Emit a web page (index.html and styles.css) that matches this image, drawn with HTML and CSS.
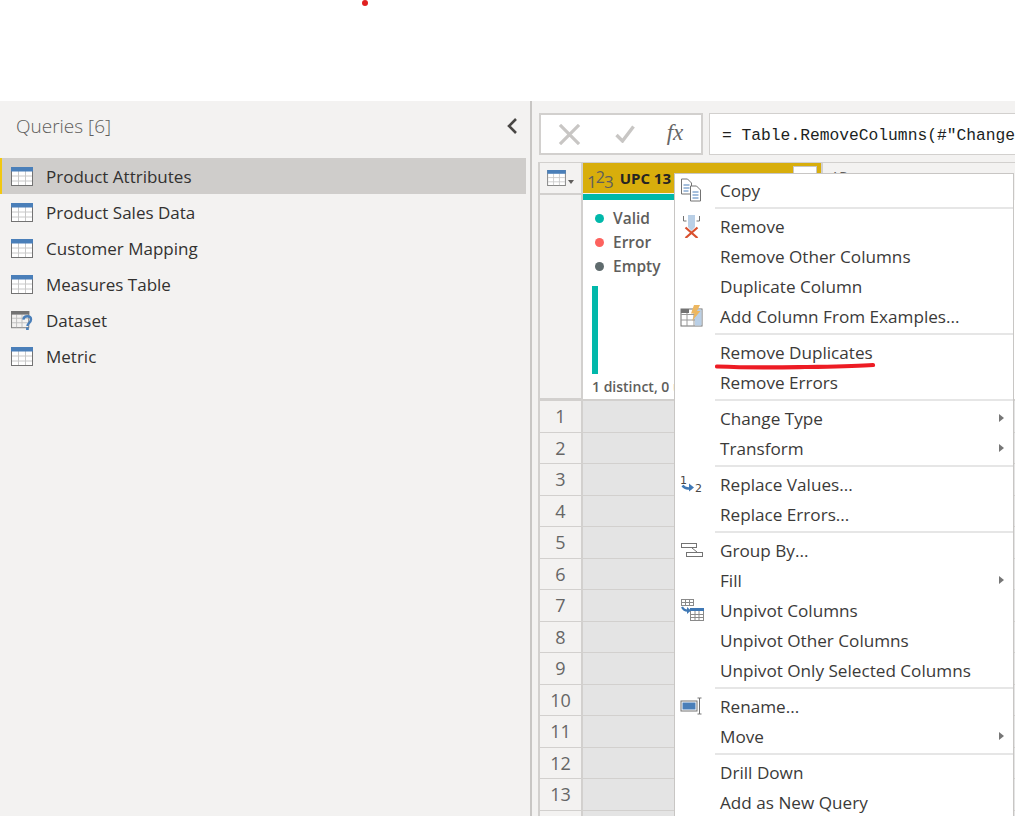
FILE: index.html
```html
<!DOCTYPE html>
<html lang="en">
<head>
  <meta charset="UTF-8"/>
  <meta name="viewport" content="width=device-width, initial-scale=1"/>
  <title>Power Query Editor</title>
  <link rel="stylesheet" href="styles.css">
</head>
<body>

  <!-- shared icons -->
  <svg class="defs" width="0" height="0" aria-hidden="true">
    <symbol id="table" viewBox="0 0 22 19">
      <rect x="0.5" y="0.5" width="21" height="18" fill="#fff" stroke="#737373"/>
      <path d="M1 9h20M1 14h20M7.5 4v14M14.5 4v14" stroke="#c8c8c8" fill="none"/>
      <rect x="0" y="0" width="22" height="4.5" fill="#4a7fb9"/>
    </symbol>
  </svg>

  <div class="top-band"></div>

  <div class="workspace">
    <aside class="queries">
      <div class="queries-head">
        <h2>Queries [6]</h2>
        <svg class="collapse" width="14" height="18" viewBox="0 0 14 18"><path d="M11 2 4 9l7 7" fill="none" stroke="#484644" stroke-width="2.6"/></svg>
      </div>
      <ul class="query-list">
        <li class="query selected"><svg class="query-icon"><use href="#table"/></svg>Product Attributes</li>
        <li class="query"><svg class="query-icon"><use href="#table"/></svg>Product Sales Data</li>
        <li class="query"><svg class="query-icon"><use href="#table"/></svg>Customer Mapping</li>
        <li class="query"><svg class="query-icon"><use href="#table"/></svg>Measures Table</li>
        <li class="query">
          <svg class="query-icon" viewBox="0 0 24 21">
            <rect x="0.5" y="0.5" width="19" height="18" fill="#f3f2f1" stroke="#737373"/>
            <path d="M1 8h18M1 13h18M6 4v14M12 4v14" stroke="#bdbdbd" fill="none"/>
            <rect x="0" y="0" width="20" height="4" fill="#737373"/>
            <path d="M13.5 9.5c.5-5 8.500-5 8.500 0 0 3.500-4 3.500-4 7" fill="none" stroke="#4a7fb9" stroke-width="2.600"/>
            <rect x="16.500" y="18" width="3" height="3" fill="#4a7fb9"/>
          </svg>
          Dataset
        </li>
        <li class="query"><svg class="query-icon"><use href="#table"/></svg>Metric</li>
      </ul>
    </aside>

    <main class="editor">
      <div class="formula-row">
        <div class="formula-tools">
          <span class="tool">
            <svg width="23" height="21" viewBox="0 0 24 22"><path d="M2 1l20 20M22 1 2 21" stroke="#c8c6c4" stroke-width="3.400" fill="none"/></svg>
          </span>
          <span class="tool">
            <svg width="20" height="18" viewBox="0 0 20 18"><path d="M1.500 10l6 6L18.500 1.500" stroke="#c8c6c4" stroke-width="3.400" fill="none"/></svg>
          </span>
          <span class="tool tool-fx">fx</span>
        </div>
        <div class="formula-input">= Table.RemoveColumns(#"Changed Type",{"Column1"})</div>
      </div>

      <div class="grid">
        <div class="corner">
          <svg class="corner-icon"><use href="#table"/></svg>
          <span class="caret"></span>
        </div>
        <div class="col-head active">
          <span class="type-icon">1<span class="type-raised">2</span>3</span>
          <span class="col-name">UPC 13 digit</span>
          <span class="filter-btn"></span>
        </div>
        <div class="col-head other">
          <span class="type-abc">AB</span>
          <span class="col-name">Product</span>
        </div>

        <div class="row-num profile-gutter"></div>
        <div class="profile">
          <ul class="quality">
            <li><i class="dot dot-valid"></i>Valid</li>
            <li><i class="dot dot-error"></i>Error</li>
            <li><i class="dot dot-empty"></i>Empty</li>
          </ul>
          <div class="dist-bar"></div>
          <div class="distinct">1 distinct, 0 unique</div>
        </div>
        <div class="profile profile-other"></div>

        <div class="row-num">1</div><div class="cell"></div><div class="cell"></div>
        <div class="row-num">2</div><div class="cell"></div><div class="cell"></div>
        <div class="row-num">3</div><div class="cell"></div><div class="cell"></div>
        <div class="row-num">4</div><div class="cell"></div><div class="cell"></div>
        <div class="row-num">5</div><div class="cell"></div><div class="cell"></div>
        <div class="row-num">6</div><div class="cell"></div><div class="cell"></div>
        <div class="row-num">7</div><div class="cell"></div><div class="cell"></div>
        <div class="row-num">8</div><div class="cell"></div><div class="cell"></div>
        <div class="row-num">9</div><div class="cell"></div><div class="cell"></div>
        <div class="row-num">10</div><div class="cell"></div><div class="cell"></div>
        <div class="row-num">11</div><div class="cell"></div><div class="cell"></div>
        <div class="row-num">12</div><div class="cell"></div><div class="cell"></div>
        <div class="row-num">13</div><div class="cell"></div><div class="cell"></div>
        <div class="row-num"></div><div class="cell"></div><div class="cell"></div>
      </div>
    </main>
  </div>

  <!-- context menu -->
  <div class="menu">
    <div class="item">
      <span class="item-icon">
        <svg width="24" height="24" viewBox="0 0 24 24">
          <path d="M1.500 1h6l4 4v11h-10z" fill="#fff" stroke="#737373"/>
          <path d="M3.500 7h6M3.500 10h6M3.500 13h5" stroke="#4a7fb9"/>
          <path d="M10.500 8h6l4 4v11h-10z" fill="#fff" stroke="#737373"/>
          <path d="M12.500 14h6M12.500 17h6M12.500 20h6" stroke="#4a7fb9"/>
        </svg>
      </span>
      Copy
    </div>
    <div class="sep"></div>

    <div class="item">
      <span class="item-icon">
        <svg width="24" height="24" viewBox="0 0 24 24">
          <path d="M3.500 2v5h3M19.500 2v5h-3" fill="none" stroke="#737373"/>
          <rect x="8" y="1" width="7" height="12" fill="#b9cfe6"/>
          <path d="M11.500 17 8 13h7z" fill="#b9cfe6"/>
          <path d="M5.500 13.500 17.500 24M17.500 13.500 5.500 24" stroke="#d9502e" stroke-width="2.200" fill="none"/>
        </svg>
      </span>
      Remove
    </div>
    <div class="item"><span class="item-icon"></span>Remove Other Columns</div>
    <div class="item"><span class="item-icon"></span>Duplicate Column</div>
    <div class="item">
      <span class="item-icon">
        <svg width="24" height="22" viewBox="0 0 24 22">
          <rect x="1" y="4" width="21" height="17" fill="#fff" stroke="#737373"/>
          <rect x="15" y="4.500" width="6.500" height="16" fill="#b9cfe6"/>
          <path d="M1 9.500h14M1 15h14M7 8v13M14 4v17" stroke="#9a9a9a" fill="none"/>
          <rect x="1" y="4" width="8" height="4" fill="#737373"/>
          <path d="M14 0h6l-3 6h3.500L12 16l2.500-7.500H11z" fill="#edb760"/>
        </svg>
      </span>
      Add Column From Examples...
    </div>
    <div class="sep"></div>

    <div class="item"><span class="item-icon"></span>Remove Duplicates</div>
    <div class="item"><span class="item-icon"></span>Remove Errors</div>
    <div class="sep"></div>

    <div class="item"><span class="item-icon"></span>Change Type<i class="arrow"></i></div>
    <div class="item"><span class="item-icon"></span>Transform<i class="arrow"></i></div>
    <div class="sep"></div>

    <div class="item">
      <span class="item-icon">
        <svg width="24" height="22" viewBox="0 0 24 22">
          <text class="icon-num" x="0" y="11">1</text>
          <text class="icon-num" x="15" y="19">2</text>
          <path d="M2.500 12.500c2 3 5 3.500 9 2.500" fill="none" stroke="#3f78b5" stroke-width="2.400"/>
          <path d="M9 10.500l5 4-5 4z" fill="#3f78b5"/>
        </svg>
      </span>
      Replace Values...
    </div>
    <div class="item"><span class="item-icon"></span>Replace Errors...</div>
    <div class="sep"></div>

    <div class="item">
      <span class="item-icon">
        <svg width="24" height="16" viewBox="0 0 24 16">
          <rect x="1.500" y="1.500" width="15" height="4" fill="#fff" stroke="#737373"/>
          <rect x="6.500" y="10.500" width="16" height="4" fill="#fff" stroke="#737373"/>
          <path d="M12 6l5 4" stroke="#737373" fill="none"/>
        </svg>
      </span>
      Group By...
    </div>
    <div class="item"><span class="item-icon"></span>Fill<i class="arrow"></i></div>
    <div class="item">
      <span class="item-icon">
        <svg width="24" height="22" viewBox="0 0 24 22">
          <rect x="1.500" y="0.500" width="12" height="6" fill="#fff" stroke="#8a8a8a"/>
          <path d="M1 3.500h12M5.500 1v6M9.500 1v6" stroke="#8a8a8a" fill="none"/>
          <rect x="10.500" y="10.500" width="13" height="11" fill="#fff" stroke="#8a8a8a"/>
          <path d="M11 15.500h12M11 18.500h12M15 11v10M19 11v10" stroke="#8a8a8a" fill="none"/>
          <rect x="10" y="9" width="14" height="3" fill="#3f78b5"/>
          <path d="M2 8c1.500 3 4 4 7 3.500" fill="none" stroke="#3f78b5" stroke-width="2.200"/>
          <path d="M7 8l4 3.500-4 3.500z" fill="#3f78b5"/>
        </svg>
      </span>
      Unpivot Columns
    </div>
    <div class="item"><span class="item-icon"></span>Unpivot Other Columns</div>
    <div class="item"><span class="item-icon"></span>Unpivot Only Selected Columns</div>
    <div class="sep"></div>

    <div class="item">
      <span class="item-icon">
        <svg width="24" height="18" viewBox="0 0 24 18">
          <rect x="1" y="4" width="16" height="10" fill="#fff" stroke="#737373"/>
          <rect x="2.500" y="5.500" width="13" height="7" fill="#4a7fb9"/>
          <path d="M17.500 1h2v16h-2M21.500 1h-2M21.500 17h-2" stroke="#737373" fill="none"/>
        </svg>
      </span>
      Rename...
    </div>
    <div class="item"><span class="item-icon"></span>Move<i class="arrow"></i></div>
    <div class="sep"></div>

    <div class="item"><span class="item-icon"></span>Drill Down</div>
    <div class="item"><span class="item-icon"></span>Add as New Query</div>
  </div>

  <!-- hand drawn marks on top of the screenshot -->
  <i class="red-dot"></i>
  <svg class="red-line" width="162" height="8" viewBox="0 0 162 8">
    <path d="M2 4.500C40 6 60 5.500 90 5c25-.4 50-.5 68-2" fill="none" stroke="#ed1c24" stroke-width="4.200" stroke-linecap="round"/>
  </svg>

</body>
</html>
```

FILE: styles.css
```css
html, body {
  margin: 0;
  height: 816px;
  overflow: hidden;
}

body {
  font-family: "Open Sans", "Noto Sans", Arial, sans-serif;
  font-size: 17px;
  color: #3b3a39;
  background-color: #fff;
}

ul {
  list-style: none;
  margin: 0;
  padding: 0;
}

.defs {
  display: block;
  height: 0;
}

.top-band {
  height: 101px;
}

.workspace {
  display: flex;
  height: 715px;
  background-color: #f3f2f1;
}

/* === QUERIES PANE === */
.queries {
  width: 530px;
  flex: none;
  border-right: 2px solid #c8c6c4;
}

.queries-head {
  display: flex;
  align-items: center;
  justify-content: space-between;
  height: 49px;
  padding: 0 11px 0 16px;
  margin-bottom: 8px;
}

.queries-head h2 {
  margin: 0;
  font-size: 19px;
  font-weight: 300;
  color: #605e5c;
}

.collapse {
  margin-top: 1px;
}

.query-list {
  width: 526px;
}

.query {
  display: flex;
  align-items: center;
  height: 36px;
  padding-left: 11px;
  color: #323130;
}

.query.selected {
  background-color: #cfcdcb;
  box-shadow: inset 2px 0 0 #f2c811;
}

.query-icon {
  width: 22px;
  height: 19px;
  margin-right: 13px;
  flex: none;
}

/* === FORMULA BAR === */
.editor {
  flex: 1;
  min-width: 0;
  padding: 12px 0 0 7px;
}

.formula-row {
  display: flex;
  gap: 6px;
  height: 42px;
  margin-bottom: 7px;
}

.formula-tools {
  display: flex;
  width: 164px;
  flex: none;
  box-sizing: border-box;
  background-color: #fff;
  border: 2px solid #d2d0ce;
}

.tool {
  display: flex;
  align-items: center;
  justify-content: center;
  width: 56px;
}

.tool-fx {
  width: 44px;
  padding-bottom: 2px;
  font-family: "Liberation Serif", serif;
  font-style: italic;
  font-size: 23px;
  color: #666;
}

.formula-input {
  flex: 1;
  min-width: 0;
  overflow: hidden;
  white-space: pre;
  padding-left: 12px;
  line-height: 43px;
  font-family: "Liberation Mono", monospace;
  font-size: 16.3px;
  color: #201f1e;
  background-color: #fff;
  border: 1px solid #d2d0ce;
  border-right: none;
}

/* === DATA GRID === */
.grid {
  display: grid;
  grid-template-columns: 41px 238px 1fr;
  grid-template-rows: 31px 207px;
  grid-auto-rows: 31.5px;
  column-gap: 2px;
  height: 654px;
  margin-left: -1px;
  overflow: hidden;
  background-color: #d2d0ce;
  border-top: 1px solid #d2d0ce;
  border-left: 2px solid #d2d0ce;
}

.corner {
  display: flex;
  align-items: center;
  padding-left: 7px;
  background-color: #f3f2f1;
  border-bottom: 1px solid #d2d0ce;
}

.corner-icon {
  width: 19px;
  height: 16px;
}

.caret {
  width: 0;
  height: 0;
  margin: 8px 0 0 2px;
  border: 3.5px solid transparent;
  border-top: 4px solid #605e5c;
  border-bottom: none;
}

.col-head {
  display: flex;
  align-items: center;
  gap: 7px;
  padding-left: 4px;
  overflow: hidden;
  white-space: nowrap;
  background-color: #f3f2f1;
}

.col-head.active {
  position: relative;
  background-color: #d8ae0c;
  border-bottom: 1px solid #f3f2f1;
}

.type-icon {
  font-size: 17px;
  color: #605e5c;
  letter-spacing: -1px;
  line-height: 1;
  padding-top: 2px;
}

.type-raised {
  vertical-align: 5px;
  font-size: 16px;
}

.type-abc {
  margin: 0 0 0 4px;
  align-self: flex-start;
  padding-top: 4px;
  font-size: 13px;
  color: #605e5c;
}

.col-name {
  font-size: 15px;
  font-weight: 700;
  color: #252423;
}

.other .col-name {
  margin-left: 14px;
}

.filter-btn {
  position: absolute;
  top: 3px;
  right: 4px;
  width: 22px;
  height: 22px;
  background-color: #fff;
  border: 1px solid #c8c6c4;
}

.profile-gutter {
  height: 205px;
  border-top: 1px solid #d2d0ce;
}

.profile {
  box-sizing: border-box;
  height: 205px;
  padding: 6px 0 0 9px;
  white-space: nowrap;
  overflow: hidden;
  background-color: #fff;
  border-top: 6px solid #01b8aa;
}

.profile-other {
  border-top-color: #f3f2f1;
}

.quality li {
  display: flex;
  align-items: center;
  height: 24px;
  font-size: 15.5px;
  font-weight: 600;
  color: #605e5c;
}

.dot {
  width: 9px;
  height: 9px;
  margin: 0 9px 0 3px;
  border-radius: 50%;
}

.dot-valid { background-color: #01b8aa; }
.dot-error { background-color: #fd625e; }
.dot-empty { background-color: #5f6b6d; }

.dist-bar {
  width: 6px;
  height: 88px;
  margin-top: 8px;
  background-color: #01b8aa;
}

.distinct {
  margin-top: 3px;
  font-size: 14px;
  font-weight: 600;
  color: #605e5c;
}

.row-num {
  display: flex;
  align-items: center;
  justify-content: center;
  box-sizing: border-box;
  font-size: 18px;
  color: #666;
  background-color: #f3f2f1;
  border-bottom: 1.5px solid #d2d0ce;
}

.cell {
  box-sizing: border-box;
  background-color: #e4e4e4;
  border-bottom: 1.5px solid #d2d0ce;
}

/* === CONTEXT MENU === */
.menu {
  position: absolute;
  top: 173px;
  left: 674px;
  right: 1px;
  height: 643px;
  box-sizing: border-box;
  padding-top: 1px;
  overflow: hidden;
  font-size: 17.15px;
  background-color: #fff;
  border: 1px solid #c8c6c4;
  border-bottom: none;
}

.item {
  display: flex;
  align-items: center;
  height: 30px;
  padding-right: 9px;
  white-space: nowrap;
  color: #3b3a39;
}

.item-icon {
  display: flex;
  align-items: center;
  width: 40px;
  padding-left: 5px;
  flex: none;
}

.sep {
  height: 2px;
  margin: 2px 0 2px 40px;
  background-color: #e6e6e6;
}

.arrow {
  width: 0;
  height: 0;
  margin-left: auto;
  border: 4px solid transparent;
  border-left: 5px solid #767676;
  border-right: none;
}

.icon-num {
  font-family: "DejaVu Sans", sans-serif;
  font-size: 11px;
  fill: #484644;
}

/* === RED MARKS === */
.red-dot {
  position: absolute;
  top: 0;
  left: 362px;
  width: 6px;
  height: 6px;
  border-radius: 50%;
  background-color: #e02020;
}

.red-line {
  position: absolute;
  top: 362px;
  left: 715px;
}
```
